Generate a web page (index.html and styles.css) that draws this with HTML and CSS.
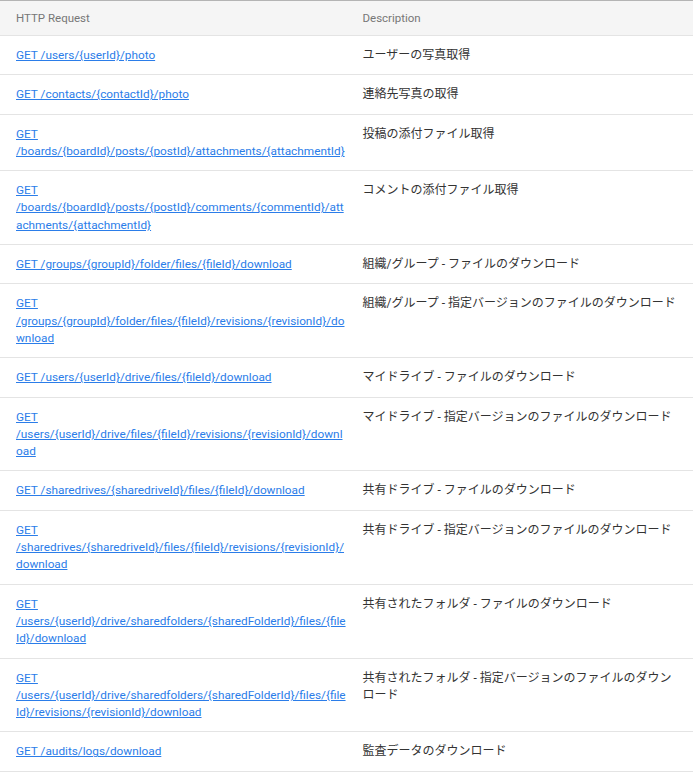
FILE: index.html
```html
<!DOCTYPE html>
<html lang="ja">

<head>
    <meta charset="UTF-8">
    <meta name="viewport" content="width=device-width, initial-scale=1.0">
    <title>HTTP Request</title>
    <link rel="stylesheet" href="styles.css">
</head>

<body>

    <table class="api-table">
        <thead>
            <tr>
                <th>HTTP Request</th>
                <th>Description</th>
            </tr>
        </thead>
        <tbody>
            <tr>
                <td><a href="#">GET /users/{userId}/photo</a></td>
                <td>ユーザーの写真取得</td>
            </tr>
            <tr>
                <td><a href="#">GET /contacts/{contactId}/photo</a></td>
                <td>連絡先写真の取得</td>
            </tr>
            <tr>
                <td><a href="#">GET /boards/{boardId}/posts/{postId}/attachments/{attachmentId}</a></td>
                <td>投稿の添付ファイル取得</td>
            </tr>
            <tr>
                <td><a href="#">GET /boards/{boardId}/posts/{postId}/comments/{commentId}/attachments/{attachmentId}</a></td>
                <td>コメントの添付ファイル取得</td>
            </tr>
            <tr>
                <td><a href="#">GET /groups/{groupId}/folder/files/{fileId}/download</a></td>
                <td>組織/グループ - ファイルのダウンロード</td>
            </tr>
            <tr>
                <td><a href="#">GET /groups/{groupId}/folder/files/{fileId}/revisions/{revisionId}/download</a></td>
                <td>組織/グループ - 指定バージョンのファイルのダウンロード</td>
            </tr>
            <tr>
                <td><a href="#">GET /users/{userId}/drive/files/{fileId}/download</a></td>
                <td>マイドライブ - ファイルのダウンロード</td>
            </tr>
            <tr>
                <td><a href="#">GET /users/{userId}/drive/files/{fileId}/revisions/{revisionId}/download</a></td>
                <td>マイドライブ - 指定バージョンのファイルのダウンロード</td>
            </tr>
            <tr>
                <td><a href="#">GET /sharedrives/{sharedriveId}/files/{fileId}/download</a></td>
                <td>共有ドライブ - ファイルのダウンロード</td>
            </tr>
            <tr>
                <td><a href="#">GET /sharedrives/{sharedriveId}/files/{fileId}/revisions/{revisionId}/download</a></td>
                <td>共有ドライブ - 指定バージョンのファイルのダウンロード</td>
            </tr>
            <tr>
                <td><a href="#">GET /users/{userId}/drive/sharedfolders/{sharedFolderId}/files/{fileId}/download</a></td>
                <td>共有されたフォルダ - ファイルのダウンロード</td>
            </tr>
            <tr>
                <td><a href="#">GET /users/{userId}/drive/sharedfolders/{sharedFolderId}/files/{fileId}/revisions/{revisionId}/download</a></td>
                <td>共有されたフォルダ - 指定バージョンのファイルのダウンロード</td>
            </tr>
            <tr>
                <td><a href="#">GET /audits/logs/download</a></td>
                <td>監査データのダウンロード</td>
            </tr>
        </tbody>
    </table>

</body>

</html>
```

FILE: styles.css
```css
body {
    margin: 0;
    font-family: Roboto, "Noto Sans CJK JP", sans-serif;
    background: #fff;
}

.api-table {
    width: 693px;
    border-collapse: collapse;
    table-layout: fixed;
    border-top: 1px solid #b4b4b4;
    font-size: 12px;
    line-height: 17.3px;
}

.api-table th {
    background: #f5f5f5;
    color: #777;
    font-size: 11.5px;
    font-weight: normal;
    text-align: left;
    padding: 9px 16px 9px 16px;
    line-height: 16px;
    border-bottom: 1px solid #e4e4e4;
}

.api-table td {
    vertical-align: top;
    padding: 11px 16px 10px 16px;
    border-bottom: 1px solid #e4e4e4;
    color: #333;
    overflow-wrap: anywhere;
}

.api-table td:first-child {
    padding-right: 0;
}

.api-table a {
    color: #2b7de9;
    font-size: 11.8px;
    text-decoration: underline;
}
```
